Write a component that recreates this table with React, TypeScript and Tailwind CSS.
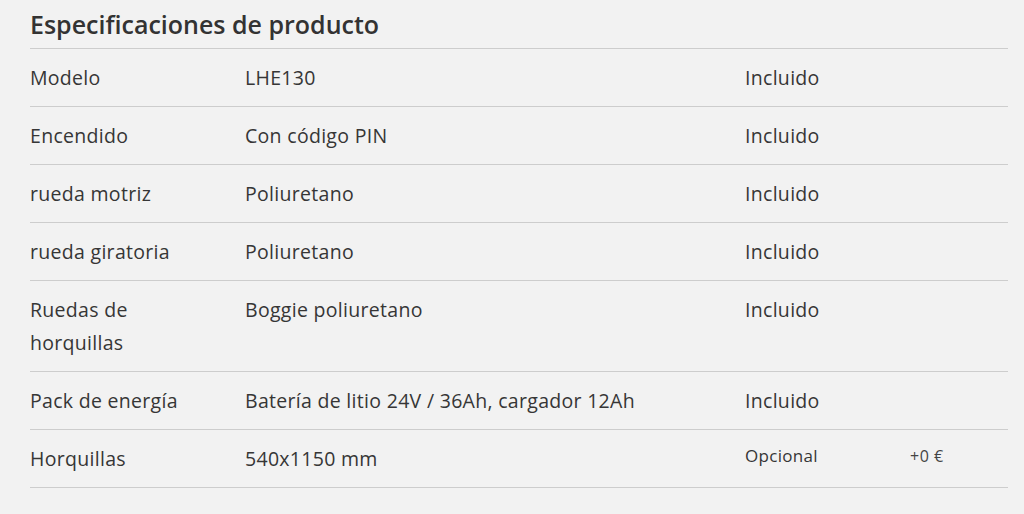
import React from 'react';

type Row = { label: string; value: string; status: string; price?: string };

const rows: Row[] = [
  { label: 'Modelo', value: 'LHE130', status: 'Incluido' },
  { label: 'Encendido', value: 'Con código PIN', status: 'Incluido' },
  { label: 'rueda motriz', value: 'Poliuretano', status: 'Incluido' },
  { label: 'rueda giratoria', value: 'Poliuretano', status: 'Incluido' },
  { label: 'Ruedas de horquillas', value: 'Boggie poliuretano', status: 'Incluido' },
  { label: 'Pack de energía', value: 'Batería de litio 24V / 36Ah, cargador 12Ah', status: 'Incluido' },
  { label: 'Horquillas', value: '540x1150 mm', status: 'Opcional', price: '+0 €' },
];

export default function App() {
  return (
    <div
      className="w-[1024px] h-[514px] bg-[#f2f2f2] text-[#363636] pl-[30px] pr-[16px] overflow-hidden"
      style={{ fontFamily: '"Open Sans", "Noto Sans", sans-serif' }}
    >
      <h2 className="text-[25px] font-semibold leading-[48px] h-[48px] text-[#333]">
        Especificaciones de producto
      </h2>
      <div className="border-t border-[#cdcdcd]">
        {rows.map((r) => (
          <div
            key={r.label}
            className="grid grid-cols-[215px_500px_165px_1fr] border-b border-[#cdcdcd] py-[12px] text-[19.5px] leading-[33px] tracking-[0.3px]"
          >
            <div className="pr-4">{r.label === 'Ruedas de horquillas' ? <>Ruedas de<br />horquillas</> : r.label}</div>
            <div>{r.value}</div>
            {r.price ? (
              <div className="text-[17px] leading-[28px]">{r.status}</div>
            ) : (
              <div>{r.status}</div>
            )}
            <div className="text-[16px] leading-[28px] tracking-[0.5px] text-[#444]">{r.price}</div>
          </div>
        ))}
      </div>
    </div>
  );
}
